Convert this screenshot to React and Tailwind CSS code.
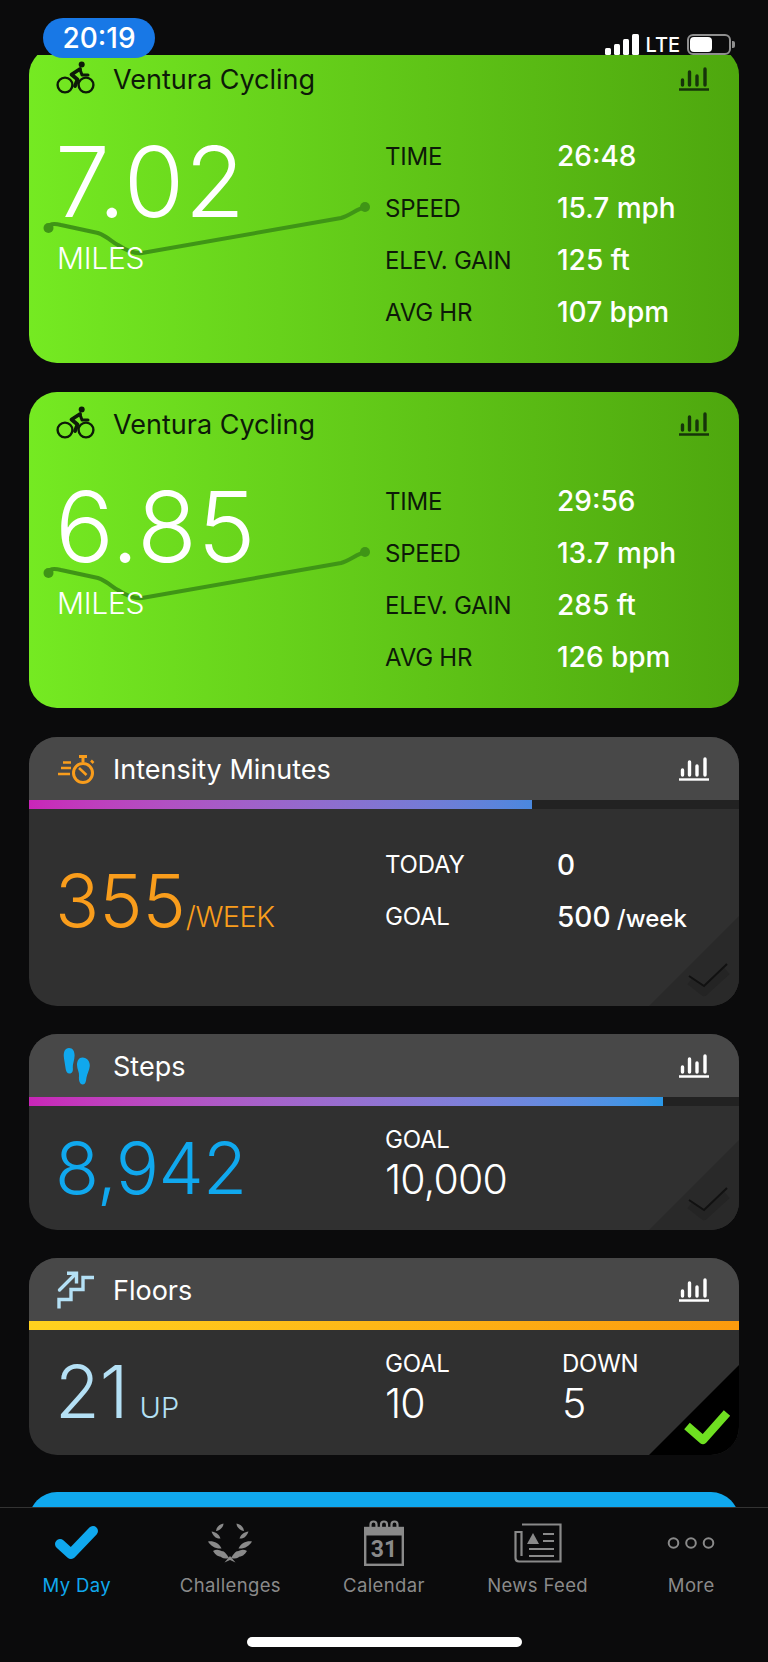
const FONT = { fontFamily: 'Inter, "Noto Sans", sans-serif' };

function ChartIcon({ color }) {
  return (
    <svg width="32" height="26" viewBox="0 0 32 26" fill="none" stroke={color} strokeLinecap="round">
      <path d="M4.5 14V19M11.5 6V19M19 10V19M27 3V19" strokeWidth="3.4" />
      <path d="M1 23.5H31" strokeWidth="2.4" strokeLinecap="butt" />
    </svg>
  );
}

function BikeIcon() {
  return (
    <svg width="40" height="40" viewBox="0 0 40 40" fill="none">
      <circle cx="9" cy="26" r="7.4" stroke="#0d1a08" strokeWidth="2.4" />
      <circle cx="30" cy="26" r="7.4" stroke="#0d1a08" strokeWidth="2.4" />
      <circle cx="25.7" cy="5.4" r="3" fill="#0d1a08" />
      <path d="M24 10L15.5 15.5L21.5 20.5L19 27" stroke="#0d1a08" strokeWidth="3.8" strokeLinejoin="round" strokeLinecap="round" />
      <path d="M24 10.5L26 16H32" stroke="#0d1a08" strokeWidth="3" strokeLinejoin="round" strokeLinecap="round" />
    </svg>
  );
}

function StopwatchIcon() {
  return (
    <svg width="40" height="40" viewBox="0 0 40 40" fill="none" stroke="#f99d1c">
      <circle cx="27" cy="24" r="9.5" strokeWidth="3" />
      <path d="M27 7V13M23 7.5H31" strokeWidth="3" />
      <path d="M35 11.5L37.5 14" strokeWidth="2.5" />
      <path d="M23 19L30.5 26" strokeWidth="2.5" />
      <path d="M7 13.5H15M5 19H15M2 25H14" strokeWidth="2.4" />
    </svg>
  );
}

function StepsIcon() {
  return (
    <svg width="40" height="40" viewBox="0 0 40 40" fill="#10a8ee">
      <path d="M13 2C9 2 7.5 6 7.8 10.5C8.1 14 9 18 9.5 22C9.9 25.5 11 27.5 13.5 27.5C16.5 27.5 17.2 25 16.8 21.5C16.5 18 18.6 14 18.6 9.5C18.6 5.5 17 2 13 2Z" />
      <path d="M26.5 11.5C22.8 11.5 21 15 21 19C21 23 23.5 26.5 23 30C22.6 34 23.5 38.5 26.8 38.5C29.5 38.5 30 35.5 30.4 32C31 28 33.5 24 33.8 20C34 15.5 31 11.5 26.5 11.5Z" />
    </svg>
  );
}

function StairsIcon() {
  return (
    <svg width="40" height="40" viewBox="0 0 40 40" fill="none" stroke="#b4e0f5" strokeWidth="3.4">
      <path d="M3 38.5V29.5H15V19.5H27V7.5H38" />
      <path d="M3.5 20L19 4.5" strokeLinecap="round" />
      <path d="M11 3.2H20.5V13.5" />
    </svg>
  );
}

function CornerCheck({ done }) {
  return (
    <svg className="absolute right-0 bottom-0" width="90" height="90" viewBox="0 0 90 90">
      <path d="M90 0V90H0Z" fill={done ? "#000000" : "#292929"} />
      {done ? (
        <path d="M38 61L54 75L78 48" fill="none" stroke="#6fe021" strokeWidth="8.5" strokeLinejoin="round" />
      ) : (
        <>
          <path d="M41 65L55 76L78 55" fill="none" stroke="#242424" strokeWidth="8" strokeLinejoin="round" />
          <path d="M40 60L55 70L78 48" fill="none" stroke="#111111" strokeWidth="2" />
        </>
      )}
    </svg>
  );
}

function Route() {
  return (
    <svg className="absolute left-0 top-0" width="360" height="220" viewBox="0 0 360 220" fill="none">
      <path d="M19.5 181C20 177 24 176 32 178L69 186C78 189 83 195 89 198C95 202 104 207 113 206L312 171C320 169 328 162 336 160" stroke="#3f9516" strokeWidth="4" strokeLinecap="round" />
      <circle cx="19.5" cy="181" r="5" fill="#3f9516" />
      <circle cx="336" cy="160" r="5" fill="#3f9516" />
    </svg>
  );
}

function Activity({ distance, rows, clipped }) {
  return (
    <section className={`relative h-[316px] shrink-0 overflow-hidden rounded-[28px] bg-linear-to-r from-[#75ea22] to-[#4ea70e] ${clipped ? "-mt-2" : ""}`}>
      <Route />
      <header className="relative flex h-[63px] items-center pl-[27px] pr-[29px]">
        <BikeIcon />
        <h2 className="ml-[17px] flex-1 pt-[3px] text-[27px] text-[#0d1a08]">Ventura Cycling</h2>
        <ChartIcon color="#16330a" />
      </header>
      <div className="relative flex pt-[20px]">
        <div className="w-[356px] pl-[28px]">
          <div className="mt-[3px] ml-[-2px] text-[98px] leading-none font-[350] tracking-[0.005em] text-white">{distance}</div>
          <div className="mt-[9px] text-[30px] leading-[36px] font-light tracking-[-0.01em] text-white">MILES</div>
        </div>
        <div className="flex-1">
          {rows.map(([label, value]) => (
            <div key={label} className="flex h-[52px] items-center">
              <span className="w-[172px] pt-[2px] text-[24px] text-[#0d1a08] tracking-[-0.01em]">{label}</span>
              <span className="text-[28px] font-medium text-white">{value}</span>
            </div>
          ))}
        </div>
      </div>
    </section>
  );
}

function DarkCard({ title, icon, bar, height = "h-[197px]", children }) {
  return (
    <section className={`relative ${height} shrink-0 overflow-hidden rounded-[28px] bg-[#303030]`}>
      <header className="flex h-[63px] items-center bg-[#484848] pl-[27px] pr-[29px]">
        {icon}
        <h2 className="ml-[17px] flex-1 pt-[3px] text-[27px] text-white">{title}</h2>
        <ChartIcon color="#ffffff" />
      </header>
      <div className="h-[9px] bg-[#222222]">{bar}</div>
      {children}
    </section>
  );
}

function Stat({ label, value }) {
  return (
    <div>
      <div className="text-[24px] leading-[28px] tracking-[-0.01em] text-white">{label}</div>
      <div className="mt-[3px] text-[41px] leading-[44px] font-light tracking-[-0.02em] text-white">{value}</div>
    </div>
  );
}

function NavItem({ icon, label, active }) {
  return (
    <div className="flex flex-col items-center">
      <div className="flex h-[46px] items-center justify-center">{icon}</div>
      <span className={`mt-[7px] text-[18.5px] leading-6 tracking-[0.02em] ${active ? "text-[#10a8ee]" : "text-[#8a8a8a]"}`}>{label}</span>
    </div>
  );
}

function Laurel() {
  const leaves = (
    <g fill="#8a8a8a">
      <path d="M17.5 0.5C17.5 4 14 7.5 10 8C10.5 4 13 1.5 17.5 0.5Z" />
      <path d="M5.5 8.5C9.5 9 13 11 14.5 15.5C10 16 7 13 5.5 8.5Z" />
      <path d="M2 18.5C7 17.5 13 20 15.5 25.5C9.5 26 4.5 23 2 18.5Z" />
      <path d="M7 28C11 25.5 17 27 20.5 33C15 35 10 33.5 7 28Z" />
      <path d="M15 32C18 28.5 20 27.5 25 36C20 37.5 17 36 15 32Z" transform="translate(-2 -1)" />
    </g>
  );
  return (
    <svg width="48" height="40" viewBox="0 0 48 40">
      {leaves}
      <g transform="translate(48 0) scale(-1 1)">{leaves}</g>
      <path d="M24 33L18.5 39.5L24 37L29.5 39.5Z" fill="#8a8a8a" />
    </svg>
  );
}

function CalendarIcon() {
  return (
    <svg width="40" height="46" viewBox="0 0 40 46" fill="none" stroke="#8a8a8a">
      <rect x="1.2" y="8" width="37.6" height="36.8" strokeWidth="2.4" />
      <path d="M1 8H39V15H1Z" fill="#8a8a8a" strokeWidth="1" />
      <path d="M6.5 8V4.5C6.5 0.5 12.5 0.5 12.5 4.5V8M17 8V4.5C17 0.5 23 0.5 23 4.5V8M27.5 8V4.5C27.5 0.5 33.5 0.5 33.5 4.5V8" strokeWidth="2.2" />
      <text x="20" y="37" textAnchor="middle" fontSize="23" fontWeight="700" fill="#8a8a8a" stroke="none" fontFamily="Roboto, sans-serif">31</text>
    </svg>
  );
}

function NewsIcon() {
  return (
    <svg width="48" height="40" viewBox="0 0 48 40" fill="none" stroke="#8a8a8a" strokeWidth="2">
      <path d="M8 1.5H46.5V38.5H5C2.5 38.5 1.5 37 1.5 35V9H7.5V33" strokeWidth="2.2" />
      <path d="M19 10L25 21H13Z" fill="#8a8a8a" stroke="none" />
      <path d="M29 11H40M29 18H40M15 26H40M15 33H40" />
    </svg>
  );
}

function MoreIcon() {
  return (
    <svg width="48" height="14" viewBox="0 0 48 14" fill="none" stroke="#8a8a8a" strokeWidth="2">
      <circle cx="6.5" cy="7" r="4.8" />
      <circle cx="24" cy="7" r="4.8" />
      <circle cx="41.5" cy="7" r="4.8" />
    </svg>
  );
}

export default function App() {
  return (
    <div className="relative flex h-[1662px] w-[768px] flex-col overflow-hidden bg-[#0b0b0c]" style={FONT}>
      <div className="relative z-10 h-[55px] shrink-0 bg-[#0b0b0c]">
        <div className="absolute left-[43px] top-[18px] flex h-[40px] w-[112px] items-center justify-center rounded-[20px] bg-[#1878e6] text-[28px] font-medium text-white">
          20:19
        </div>
        <div className="absolute right-[33px] top-[34px] flex h-[21px] items-end">
          <svg width="34" height="21" viewBox="0 0 34 21" fill="#ffffff">
            <rect x="0" y="14" width="6" height="7" rx="1.5" />
            <rect x="9" y="10" width="6" height="11" rx="1.5" />
            <rect x="18" y="5" width="6" height="16" rx="1.5" />
            <rect x="27" y="0" width="7" height="21" rx="1.5" />
          </svg>
          <span className="ml-[6px] text-[20px] leading-[20px] font-medium text-white">LTE</span>
          <div className="ml-[7px] flex h-[21px] w-[44px] items-center rounded-[6px] border-2 border-[#8f8f8f] p-[1px]">
            <div className="h-full w-[22px] rounded-[4px] bg-white" />
          </div>
          <div className="mb-[7px] ml-[1px] h-[7px] w-[3px] rounded-r-[2px] bg-[#8f8f8f]" />
        </div>
      </div>

      <main className="flex min-h-0 flex-1 flex-col overflow-hidden px-[29px]">
        <Activity clipped distance="7.02" rows={[["TIME", "26:48"], ["SPEED", "15.7 mph"], ["ELEV. GAIN", "125 ft"], ["AVG HR", "107 bpm"]]} />
        <div className="mt-[29px]">
          <Activity distance="6.85" rows={[["TIME", "29:56"], ["SPEED", "13.7 mph"], ["ELEV. GAIN", "285 ft"], ["AVG HR", "126 bpm"]]} />
        </div>

        <div className="mt-[29px]">
          <DarkCard
            title="Intensity Minutes"
            icon={<StopwatchIcon />}
            height="h-[269px]"
            bar={<div className="h-full w-[503px] bg-linear-to-r from-[#c925b8] to-[#4a88de]" />}
          >
            <div className="flex pt-[30px]">
              <div className="flex w-[356px] items-baseline pl-[26px] pt-[24px] text-[#f99d1c]">
                <span className="text-[73px] leading-[76px] font-[350]">355</span>
                <span className="text-[29px] font-light tracking-[-0.02em]">/WEEK</span>
              </div>
              <div className="flex-1">
                {[["TODAY", "0", ""], ["GOAL", "500", " /week"]].map(([label, value, unit]) => (
                  <div key={label} className="flex h-[52px] items-center">
                    <span className="w-[172px] text-[24px] tracking-[-0.01em] text-white">{label}</span>
                    <span className="text-[28px] font-medium text-white">
                      {value}
                      <span className="text-[24px]">{unit}</span>
                    </span>
                  </div>
                ))}
              </div>
            </div>
            <CornerCheck />
          </DarkCard>
        </div>

        <div className="mt-[28px]">
          <DarkCard
            title="Steps"
            icon={<StepsIcon />}
            height="h-[196px]"
            bar={<div className="h-full w-[634px] bg-linear-to-r from-[#c925b8] to-[#2a98e8]" />}
          >
            <div className="flex pt-[20px]">
              <div className="w-[356px] pl-[26px] text-[72px] leading-[84px] font-[350] tracking-[-0.01em] text-[#10a8ee]">8,942</div>
              <Stat label="GOAL" value="10,000" />
            </div>
            <CornerCheck />
          </DarkCard>
        </div>

        <div className="mt-[28px]">
          <DarkCard
            title="Floors"
            icon={<StairsIcon />}
            bar={<div className="h-full bg-linear-to-r from-[#ffd21f] to-[#fb9a0d]" />}
          >
            <div className="flex pt-[20px]">
              <div className="flex w-[356px] items-baseline pl-[26px] text-[#b4e0f5]">
                <span className="text-[73px] leading-[84px] font-[350]">21</span>
                <span className="ml-[11px] text-[29px] font-light">UP</span>
              </div>
              <div className="w-[177px]"><Stat label="GOAL" value="10" /></div>
              <Stat label="DOWN" value="5" />
            </div>
            <CornerCheck done />
          </DarkCard>
        </div>

        <div className="mt-[37px] h-[120px] shrink-0 rounded-[28px] bg-[#10a8ee]" />
      </main>

      <nav className="relative z-10 h-[155px] shrink-0 border-t border-[#333333] bg-[#0b0b0c] pt-[12px]">
        <div className="grid grid-cols-5">
          <NavItem
            active
            label="My Day"
            icon={
              <svg width="44" height="34" viewBox="0 0 44 34" fill="none">
                <path d="M5 18L16 28L38 5" stroke="#10a8ee" strokeWidth="10" strokeLinejoin="round" strokeLinecap="round" />
              </svg>
            }
          />
          <NavItem label="Challenges" icon={<Laurel />} />
          <NavItem label="Calendar" icon={<CalendarIcon />} />
          <NavItem label="News Feed" icon={<NewsIcon />} />
          <NavItem label="More" icon={<MoreIcon />} />
        </div>
        <div className="mx-auto mt-[40px] h-[10px] w-[275px] rounded-full bg-white" />
      </nav>
    </div>
  );
}
